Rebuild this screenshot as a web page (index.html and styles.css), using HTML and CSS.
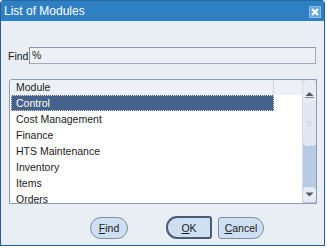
FILE: index.html
```html
<!DOCTYPE html>
<html>
<head>
<meta charset="utf-8">
<link rel="stylesheet" href="styles.css">
</head>
<body>
<div class="dialog">
  <div class="titlebar">
    <span class="title">List of Modules</span>
    <span class="close">
      <svg width="12" height="12" viewBox="0 0 12 12"><rect x="0.5" y="0.5" width="11" height="11" fill="#67a5df" stroke="#8bbbe8"/><path d="M3 3 L9 9 M9 3 L3 9" stroke="#ffffff" stroke-width="2.2"/></svg>
    </span>
  </div>
  <div class="findrow">
    <span class="findlabel">Find</span>
    <div class="findinput">%</div>
  </div>
  <div class="list">
    <div class="list-main">
      <div class="list-header"><div class="hcol">Module</div></div>
      <div class="row selected">Control</div>
      <div class="row">Cost Management</div>
      <div class="row">Finance</div>
      <div class="row">HTS Maintenance</div>
      <div class="row">Inventory</div>
      <div class="row">Items</div>
      <div class="row">Orders</div>
    </div>
    <div class="scrollbar">
      <div class="sb-btn sb-up">
        <svg width="9" height="6" viewBox="0 0 9 6"><path d="M4.5 0 L8.5 4 L0.5 4 Z" fill="#4d5868"/><rect x="0" y="5" width="9" height="1" fill="#7a8597"/></svg>
      </div>
      <div class="sb-thumb">
        <svg width="7" height="8" viewBox="0 0 7 8"><g fill="#a9b6c8"><rect x="1" y="1" width="1" height="1"/><rect x="4" y="1" width="1" height="1"/><rect x="2" y="3" width="1" height="1"/><rect x="5" y="3" width="1" height="1"/><rect x="1" y="5" width="1" height="1"/><rect x="4" y="5" width="1" height="1"/></g></svg>
      </div>
      <div class="sb-track"></div>
      <div class="sb-btn sb-down">
        <svg width="9" height="5" viewBox="0 0 9 5"><path d="M0.5 0.5 L8.5 0.5 L4.5 4.5 Z" fill="#4d5868"/></svg>
      </div>
    </div>
  </div>
  <div class="buttons">
    <div class="btn btn-find"><u>F</u>ind</div>
    <div class="btn btn-ok"><u>O</u>K</div>
    <div class="btn btn-cancel"><u>C</u>ancel</div>
  </div>
</div>
</body>
</html>
```
FILE: styles.css
```css
html, body {
  margin: 0;
  padding: 0;
  background: #ffffff;
}
.dialog {
  width: 325px;
  height: 246px;
  box-sizing: border-box;
  border: 1px solid #2a5c93;
  border-top: none;
  border-radius: 4px 4px 0 0;
  background: #e9edf4;
  font-family: "Liberation Sans", Arial, sans-serif;
  font-size: 10.5px;
  color: #1c1c1c;
  display: flex;
  flex-direction: column;
  overflow: hidden;
}
.titlebar {
  height: 21px;
  background: #2f7fc3;
  border-top: 1px solid #2668a6;
  box-sizing: border-box;
  display: flex;
  align-items: center;
  justify-content: space-between;
  padding: 0 3px 0 3px;
}
.title {
  color: #ffffff;
  font-size: 12px;
  line-height: 14px;
}
.close {
  display: flex;
  width: 12px;
  height: 12px;
  margin-top: 1px;
}
.findrow {
  display: flex;
  align-items: center;
  margin: 26px 0 0 7px;
  height: 17px;
}
.findlabel {
  width: 21px;
}
.findinput {
  width: 287px;
  height: 17px;
  box-sizing: border-box;
  border: 1px solid #a3abb8;
  border-left-color: #7f8898;
  border-top-color: #8d96a5;
  background: #edf0f5;
  padding-left: 2px;
  line-height: 15px;
}
.list {
  margin: 15px 0 0 8px;
  width: 308px;
  height: 125px;
  box-sizing: border-box;
  border: 1px solid #8f9aab;
  border-radius: 3px 0 0 0;
  background: #ffffff;
  display: flex;
  overflow: hidden;
}
.list-main {
  flex: 1;
  display: flex;
  flex-direction: column;
  padding-left: 1px;
  overflow: hidden;
}
.list-header {
  height: 15px;
  flex: none;
  background: #edf0f4;
  display: flex;
}
.hcol {
  width: 263px;
  box-sizing: border-box;
  border-right: 1px solid #cfd5de;
  padding-left: 5px;
  line-height: 15px;
}
.row {
  flex: none;
  width: 263px;
  height: 16px;
  box-sizing: border-box;
  padding-left: 5px;
  line-height: 16px;
}
.row.selected {
  background: #46618a;
  color: #ffffff;
  outline: 1px dotted #d5dbe5;
  outline-offset: -1px;
}
.scrollbar {
  width: 13px;
  flex: none;
  display: flex;
  flex-direction: column;
  background: #b9cbe3;
  border-left: 1px solid #d3dbe6;
}
.sb-btn {
  flex: none;
  display: flex;
  justify-content: center;
  background: #e6ecf4;
}
.sb-up {
  height: 22px;
  align-items: flex-end;
  padding-bottom: 4px;
  box-sizing: border-box;
  border-radius: 3px 3px 0 0;
}
.sb-thumb {
  height: 44px;
  flex: none;
  background: #e1e8f2;
  border-radius: 0 0 4px 4px;
  display: flex;
  justify-content: center;
  align-items: center;
}
.sb-track {
  flex: 1;
}
.sb-down {
  height: 15px;
  align-items: center;
  border-radius: 4px 4px 3px 3px;
  margin-bottom: 1px;
}
.buttons {
  display: flex;
  align-items: center;
  margin: 12px 0 0 89px;
}
.btn {
  height: 22px;
  box-sizing: border-box;
  background: #cddff1;
  border: 1px solid #7d8da3;
  display: flex;
  align-items: center;
  justify-content: center;
  font-size: 10.5px;
  color: #1c1c1c;
}
.btn u {
  text-decoration-thickness: 1px;
  text-underline-offset: 1px;
}
.btn-find {
  width: 38px;
  border-radius: 11px;
}
.btn-ok {
  width: 46px;
  height: 23px;
  margin-left: 38px;
  border: 2px solid #4a5c76;
  border-radius: 11px 3px 3px 11px;
}
.btn-cancel {
  width: 46px;
  margin-left: 6px;
  border-radius: 3px 11px 11px 3px;
}
```
